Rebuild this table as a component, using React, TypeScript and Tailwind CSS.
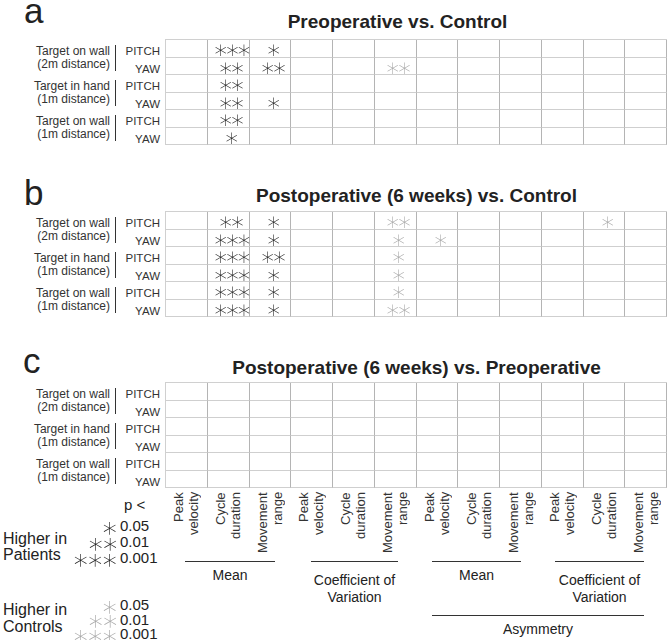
import React from "react";

type Mark = { n: number; gray?: boolean };
type Row = Record<number, Mark>;

const panelA: Row[] = [
  { 1: { n: 3 }, 2: { n: 1 } },
  { 1: { n: 2 }, 2: { n: 2 }, 5: { n: 2, gray: true } },
  { 1: { n: 2 } },
  { 1: { n: 2 }, 2: { n: 1 } },
  { 1: { n: 2 } },
  { 1: { n: 1 } },
];

const panelB: Row[] = [
  { 1: { n: 2 }, 2: { n: 1 }, 5: { n: 2, gray: true }, 10: { n: 1, gray: true } },
  { 1: { n: 3 }, 2: { n: 1 }, 5: { n: 1, gray: true }, 6: { n: 1, gray: true } },
  { 1: { n: 3 }, 2: { n: 2 }, 5: { n: 1, gray: true } },
  { 1: { n: 3 }, 2: { n: 1 }, 5: { n: 1, gray: true } },
  { 1: { n: 3 }, 2: { n: 1 }, 5: { n: 1, gray: true } },
  { 1: { n: 3 }, 2: { n: 1 }, 5: { n: 2, gray: true } },
];

const panelC: Row[] = [{}, {}, {}, {}, {}, {}];

const groups = [
  ["Target on wall", "(2m distance)"],
  ["Target in hand", "(1m distance)"],
  ["Target on wall", "(1m distance)"],
];

const columns = [
  ["Peak", "velocity"],
  ["Cycle", "duration"],
  ["Movement", "range"],
];

function Stars({ n, gray, big }: { n: number; gray?: boolean; big?: boolean }) {
  return (
    <span
      className={`inline-block font-['DejaVu_Sans',sans-serif] font-extralight leading-none will-change-transform ${
        big ? "text-[28px] tracking-[-3px]" : "text-[25px] tracking-[-4px]"
      } ${gray ? "text-[#a8a8a8]" : "text-[#222]"}`}
    >
      {"∗".repeat(n)}
    </span>
  );
}

function RowLabels() {
  return (
    <div className="w-[165px] pt-px">
      {groups.map((g, i) => (
        <div key={i} className="flex h-[35px]">
          <div className="flex w-[116px] justify-end pt-[5px]">
            <div className="h-[26px] border-r border-[#333] pr-[5px] text-right text-[12px] leading-[13px] text-[#333]">
              {g[0]}
              <br />
              {g[1]}
            </div>
          </div>
          <div className="flex-1 pr-[5px] pt-[3px] text-right text-[11.5px] leading-[17.5px] text-[#333]">
            <div>PITCH</div>
            <div>YAW</div>
          </div>
        </div>
      ))}
    </div>
  );
}

function Grid({ rows }: { rows: Row[] }) {
  return (
    <div className="grid w-[502px] grid-cols-12 border-t border-l border-[#d0d0d0]">
      {rows.map((row, r) =>
        Array.from({ length: 12 }).map((_, c) => {
          const m = row[c];
          return (
            <div
              key={`${r}-${c}`}
              className="flex h-[17.5px] items-center justify-center border-r border-b border-r-[#b4b4b4] border-b-[#cfcfcf] pt-[3px] pl-[4px]"
            >
              {m && <Stars n={m.n} gray={m.gray} />}
            </div>
          );
        })
      )}
    </div>
  );
}

function Legend({ gray, label }: { gray?: boolean; label: string }) {
  const values = ["0.05", "0.01", "0.001"];
  return (
    <div className="flex items-end">
      <div
        className={`w-[70px] pl-[3px] text-[16px] ${
          gray ? "mb-[7px] leading-[17px]" : "mb-[3px] leading-[16px]"
        }`}
      >
        Higher in
        <br />
        {label}
      </div>
      <div className="flex flex-col">
        {values.map((v, i) => (
          <div key={v} className={`flex items-center ${gray ? "h-[14.5px]" : "h-[16px]"}`}>
            <div className="flex h-full w-[46px] items-center justify-end pt-[3px]">
              <Stars n={i + 1} gray={gray} big />
            </div>
            <div className="ml-[4px] text-[15px] leading-[16px]">{v}</div>
          </div>
        ))}
      </div>
    </div>
  );
}

export default function App() {
  return (
    <div className="h-[640px] w-[668px] overflow-hidden bg-white font-['Liberation_Sans',Arial,sans-serif] text-[#222]">
      {/* a */}
      <div className="flex h-[39px] items-end">
        <div className="mb-[17px] w-[165px] pl-[24px] text-[35px] leading-[22px]">a</div>
        <div className="mb-[8px] flex-1 pr-[38px] text-center text-[19px] font-bold leading-none">
          Preoperative vs. Control
        </div>
      </div>
      <div className="flex">
        <RowLabels />
        <Grid rows={panelA} />
      </div>

      {/* b */}
      <div className="flex h-[66px] items-end">
        <div className="mb-[7px] w-[165px] pl-[24px] text-[35px] leading-[22px]">b</div>
        <div className="mb-[6px] flex-1 text-center text-[19px] font-bold leading-none">
          Postoperative (6 weeks) vs. Control
        </div>
      </div>
      <div className="flex">
        <RowLabels />
        <Grid rows={panelB} />
      </div>

      {/* c */}
      <div className="flex h-[65px] items-end">
        <div className="mb-[10px] w-[165px] pl-[23px] text-[35px] leading-[22px]">c</div>
        <div className="mb-[5px] flex-1 text-center text-[19px] font-bold leading-none">
          Postoperative (6 weeks) vs. Preoperative
        </div>
      </div>
      <div className="flex">
        <RowLabels />
        <Grid rows={panelC} />
      </div>

      <div className="flex">
        <div className="w-[165px]">
          <div className="mt-[9px] pl-[124px] text-[15px] leading-[16px]">p &lt;</div>
          <div className="mt-[5px]">
            <Legend label="Patients" />
          </div>
          <div className="mt-[32px]">
            <Legend gray label="Controls" />
          </div>
        </div>

        <div className="w-[502px]">
          <div className="grid grid-cols-12 pt-[4px]">
            {[0, 1, 2, 3].flatMap((g) =>
              columns.map((c, i) => (
                <div key={`${g}-${i}`} className="flex justify-center">
                  <div className="h-[62px] rotate-180 text-end text-[13px] leading-[15px] text-[#333] [writing-mode:vertical-rl]">
                    {c[0]}
                    <br />
                    {c[1]}
                  </div>
                </div>
              ))
            )}
          </div>

          <div className="mt-[7px] grid h-[54px] grid-cols-4 text-[14px] leading-[17px]">
            <div className="pl-[20px] pr-[15.5px]">
              <div className="h-px bg-[#333]" />
              <div className="pt-[5px] text-center">Mean</div>
            </div>
            <div className="pl-[20.5px] pr-[18px]">
              <div className="h-px bg-[#333]" />
              <div className="pt-[10px] text-center">
                Coefficient of
                <br />
                Variation
              </div>
            </div>
            <div className="pl-[16px] pr-[20.5px]">
              <div className="h-px bg-[#333]" />
              <div className="pt-[5px] text-center">Mean</div>
            </div>
            <div className="pl-[13.5px] pr-[23px]">
              <div className="h-px bg-[#333]" />
              <div className="pt-[10px] text-center">
                Coefficient of
                <br />
                Variation
              </div>
            </div>
          </div>

          <div className="ml-[267px] w-[212px] text-[14px] leading-[17px]">
            <div className="h-px bg-[#333]" />
            <div className="pt-[5px] text-center">Asymmetry</div>
          </div>
        </div>
      </div>
    </div>
  );
}
